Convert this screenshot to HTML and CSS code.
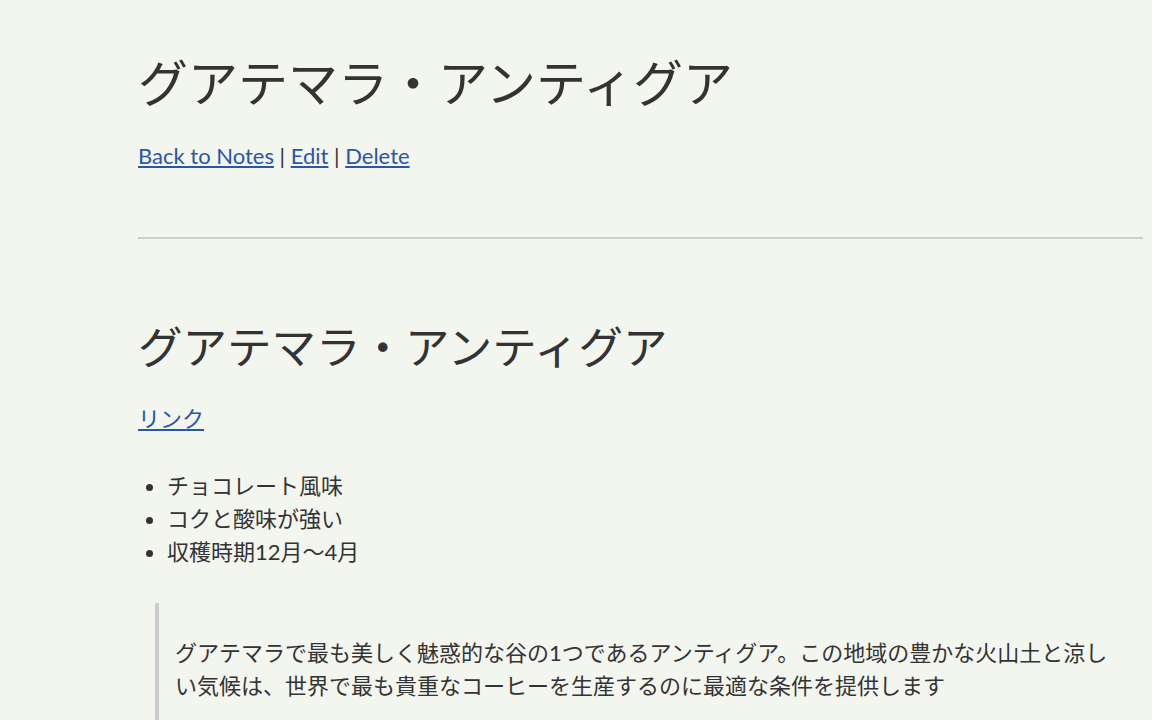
FILE: index.html
```html
<!DOCTYPE html>
<html lang="ja">
<head>
    <meta charset="UTF-8">
    <meta name="viewport" content="width=device-width, initial-scale=1.0">
    <title>グアテマラ・アンティグア</title>
    <link rel="stylesheet" href="styles.css">
</head>
<body>

<main>
    <h1 class="page-title">グアテマラ・アンティグア</h1>

    <p class="actions">
        <a href="#">Back to Notes</a> | <a href="#">Edit</a> | <a href="#">Delete</a>
    </p>

    <hr>

    <div class="note">
        <h2>グアテマラ・アンティグア</h2>
        <p class="link"><a href="#">リンク</a></p>
        <ul>
            <li>チョコレート風味</li>
            <li>コクと酸味が強い</li>
            <li>収穫時期12月～4月</li>
        </ul>
        <blockquote>
            <p>グアテマラで最も美しく魅惑的な谷の1つであるアンティグア。この地域の豊かな火山土と涼しい気候は、世界で最も貴重なコーヒーを生産するのに最適な条件を提供します</p>
        </blockquote>
    </div>
</main>

</body>
</html>
```

FILE: styles.css
```css
body {
    margin: 0;
    padding: 0 9px 0 138px;
    background-color: #f3f5ef;
    color: #333333;
    font-family: "Segoe UI", "Lato", "Noto Sans CJK JP", sans-serif;
    font-size: 22px;
    line-height: 1.5;
}

a {color: #2a55a8;}

.page-title {
    margin: 53px 0 0;
    font-size: 50px;
    font-weight: normal;
    line-height: 1.2;
}

.actions {margin: 26px 0 0;}

hr {
    margin: 65px 0 0;
    border: none;
    border-top: 2px solid #cdcfcb;
}

h2 {
    margin: 81px 0 0;
    font-size: 44.5px;
    font-weight: normal;
    line-height: 1.2;
}

.link {margin: 29px 0 0;}

ul {
    margin: 33.5px 0 0;
    padding-left: 29px;
}

blockquote {
    margin: 35px 18px 0 17px;
    padding: 33px 0 20px 16px;
    border-left: 4px solid #cccccc;
}

blockquote p {margin: 0;}
```
